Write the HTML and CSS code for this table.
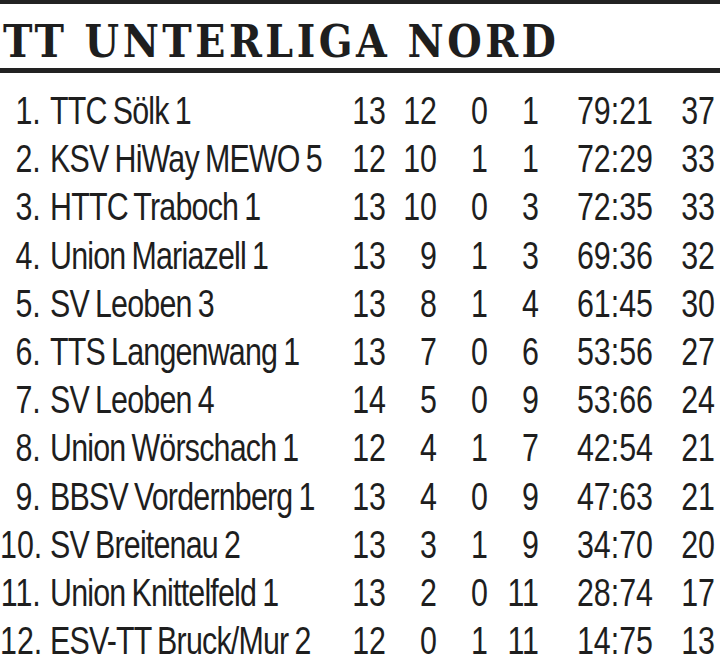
FILE: index.html
```html
<!DOCTYPE html>
<html lang="de">
<head>
<meta charset="utf-8">
<link rel="stylesheet" href="styles.css">
</head>
<body>
<div class="page">
  <h1 class="title">TT UNTERLIGA NORD</h1>
  <div class="table">
    <div class="row"><span class="rank">1.</span><span class="name">TTC Sölk 1</span><span class="n">13</span><span class="n">12</span><span class="n">0</span><span class="n">1</span><span class="n">79:21</span><span class="n">37</span></div>
    <div class="row"><span class="rank">2.</span><span class="name">KSV HiWay MEWO 5</span><span class="n">12</span><span class="n">10</span><span class="n">1</span><span class="n">1</span><span class="n">72:29</span><span class="n">33</span></div>
    <div class="row"><span class="rank">3.</span><span class="name">HTTC Traboch 1</span><span class="n">13</span><span class="n">10</span><span class="n">0</span><span class="n">3</span><span class="n">72:35</span><span class="n">33</span></div>
    <div class="row"><span class="rank">4.</span><span class="name">Union Mariazell 1</span><span class="n">13</span><span class="n">9</span><span class="n">1</span><span class="n">3</span><span class="n">69:36</span><span class="n">32</span></div>
    <div class="row"><span class="rank">5.</span><span class="name">SV Leoben 3</span><span class="n">13</span><span class="n">8</span><span class="n">1</span><span class="n">4</span><span class="n">61:45</span><span class="n">30</span></div>
    <div class="row"><span class="rank">6.</span><span class="name">TTS Langenwang 1</span><span class="n">13</span><span class="n">7</span><span class="n">0</span><span class="n">6</span><span class="n">53:56</span><span class="n">27</span></div>
    <div class="row"><span class="rank">7.</span><span class="name">SV Leoben 4</span><span class="n">14</span><span class="n">5</span><span class="n">0</span><span class="n">9</span><span class="n">53:66</span><span class="n">24</span></div>
    <div class="row"><span class="rank">8.</span><span class="name">Union Wörschach 1</span><span class="n">12</span><span class="n">4</span><span class="n">1</span><span class="n">7</span><span class="n">42:54</span><span class="n">21</span></div>
    <div class="row"><span class="rank">9.</span><span class="name">BBSV Vordernberg 1</span><span class="n">13</span><span class="n">4</span><span class="n">0</span><span class="n">9</span><span class="n">47:63</span><span class="n">21</span></div>
    <div class="row"><span class="rank">10.</span><span class="name">SV Breitenau 2</span><span class="n">13</span><span class="n">3</span><span class="n">1</span><span class="n">9</span><span class="n">34:70</span><span class="n">20</span></div>
    <div class="row"><span class="rank">11.</span><span class="name">Union Knittelfeld 1</span><span class="n">13</span><span class="n">2</span><span class="n">0</span><span class="n">11</span><span class="n">28:74</span><span class="n">17</span></div>
    <div class="row"><span class="rank">12.</span><span class="name">ESV-TT Bruck/Mur 2</span><span class="n">12</span><span class="n">0</span><span class="n">1</span><span class="n">11</span><span class="n">14:75</span><span class="n">13</span></div>
  </div>
</div>
</body>
</html>
```
FILE: styles.css
```css
html, body {
  margin: 0;
  padding: 0;
  background: #ffffff;
}
.page {
  width: 720px;
  height: 657px;
  overflow: hidden;
  color: #1e1e1e;
}
.title {
  margin: 0;
  border-top: 4px solid #222222;
  border-bottom: 5px solid #222222;
  padding: 12px 0 0 3px;
  height: 52px;
  font-family: "DejaVu Serif", serif;
  font-stretch: condensed;
  font-weight: bold;
  font-size: 44px;
  line-height: 52px;
  letter-spacing: 3.5px;
  white-space: nowrap;
}
.table {
  width: 900px;
  padding-top: 14px;
  font-family: "Liberation Sans", Arial, sans-serif;
  font-size: 38px;
  line-height: 48.2px;
  transform: scaleX(0.8);
  transform-origin: 0 0;
}
.row {
  display: grid;
  grid-template-columns: 51px 381.5px 50px 63.75px 63.75px 63.75px 142.5px 77.5px;
  white-space: nowrap;
}
.rank {
  text-align: right;
}
.name {
  padding-left: 11.5px;
  letter-spacing: -1px;
  word-spacing: -2px;
}
.n {
  text-align: right;
}
```
